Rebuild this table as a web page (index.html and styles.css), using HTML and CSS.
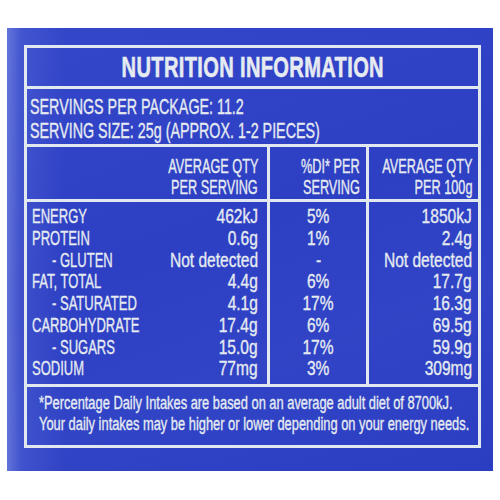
FILE: index.html
```html
<!DOCTYPE html>
<html lang="en">
<head>
    <meta charset="UTF-8">
    <meta name="viewport" content="width=device-width, initial-scale=1.0">
    <title>Nutrition Information</title>
    <link rel="stylesheet" href="styles.css">
</head>
<body>

<div class="pack">
    <div class="label">
        <h1 class="label-title"><span class="sq">NUTRITION INFORMATION</span></h1>

        <div class="servings">
            <div class="servings-line"><span class="sq">SERVINGS PER PACKAGE: 11.2</span></div>
            <div class="servings-line"><span class="sq">SERVING SIZE: 25g (APPROX. 1-2 PIECES)</span></div>
        </div>

        <div class="facts facts-head">
            <div class="col col-name"></div>
            <div class="col col-serve">
                <div class="ln"><span class="sq">AVERAGE QTY</span></div>
                <div class="ln"><span class="sq">PER SERVING</span></div>
            </div>
            <div class="col col-di">
                <div class="ln"><span class="sq">%DI* PER</span></div>
                <div class="ln"><span class="sq">SERVING</span></div>
            </div>
            <div class="col col-100">
                <div class="ln"><span class="sq">AVERAGE QTY</span></div>
                <div class="ln"><span class="sq">PER 100g</span></div>
            </div>
        </div>

        <div class="facts facts-body">
            <div class="col col-name" id="col-name"></div>
            <div class="col col-serve" id="col-serve"></div>
            <div class="col col-di" id="col-di"></div>
            <div class="col col-100" id="col-100"></div>
        </div>

        <div class="footnote">
            <div class="foot-line"><span class="sq">*Percentage Daily Intakes are based on an average adult diet of 8700kJ.</span></div>
            <div class="foot-line"><span class="sq">Your daily intakes may be higher or lower depending on your energy needs.</span></div>
        </div>
    </div>
</div>

<script>
    const nutrients = [
        { name: 'ENERGY', serve: '462kJ', di: '5%', per100: '1850kJ' },
        { name: 'PROTEIN', serve: '0.6g', di: '1%', per100: '2.4g' },
        { name: '- GLUTEN', sub: true, serve: 'Not detected', di: '-', per100: 'Not detected' },
        { name: 'FAT, TOTAL', serve: '4.4g', di: '6%', per100: '17.7g' },
        { name: '- SATURATED', sub: true, serve: '4.1g', di: '17%', per100: '16.3g' },
        { name: 'CARBOHYDRATE', serve: '17.4g', di: '6%', per100: '69.5g' },
        { name: '- SUGARS', sub: true, serve: '15.0g', di: '17%', per100: '59.9g' },
        { name: 'SODIUM', serve: '77mg', di: '3%', per100: '309mg' },
    ];

    function addLine(colId, text, sub) {
        const line = document.createElement('div');
        line.className = sub ? 'ln ln-sub' : 'ln';
        line.innerHTML = `<span class="sq">${text}</span>`;
        document.getElementById(colId).appendChild(line);
    }

    nutrients.forEach(item => {
        addLine('col-name', item.name, item.sub);
        addLine('col-serve', item.serve);
        addLine('col-di', item.di);
        addLine('col-100', item.per100);
    });
</script>

</body>
</html>
```

FILE: styles.css
```css
body {
    margin: 0;
    background: #fff;
    font-family: "Liberation Sans", Arial, sans-serif;
    color: #e6ebf1;
}
.pack {
    margin: 28px 7px 0;
    height: 443px;
    box-sizing: border-box;
    padding: 17px 12px 0 17px;
    background:
        linear-gradient(90deg, rgba(140, 155, 235, 0.55) 0, rgba(110, 125, 225, 0.25) 3%, rgba(60, 78, 205, 0) 12%),
        linear-gradient(160deg, #3447c9 0%, #2d3fc3 45%, #3144c6 70%, #2b3dc1 100%);
}
.label {
    border: 3px solid #e2e8ef;
    overflow: hidden;
    -webkit-text-stroke: 0.35px #e6ebf1;
}
.sq {
    display: inline-block;
    white-space: nowrap;
    transform: scaleX(0.62);
    transform-origin: left center;
}
.label-title {
    margin: 0;
    height: 38px;
    line-height: 38px;
    font-size: 30px;
    font-weight: bold;
    text-align: center;
    border-bottom: 3px solid #e2e8ef;
    -webkit-text-stroke: 0.6px #e6ebf1;
}
.label-title .sq {
    transform: scaleX(0.67);
    transform-origin: center;
    letter-spacing: 0.5px;
}
.servings {
    padding: 6px 0 2px 3px;
    font-size: 22px;
    line-height: 23.5px;
    border-bottom: 3px solid #e2e8ef;
    white-space: nowrap;
}
.servings .sq {
    transform: scaleX(0.65);
}
.facts {
    display: flex;
    border-bottom: 3px solid #e2e8ef;
}
.col {
    box-sizing: border-box;
    font-size: 21px;
    min-width: 0;
}
.col-name {
    flex: 1 1 0;
    padding-left: 5px;
}
.col-serve {
    flex: none;
    width: 120px;
    padding-right: 9px;
    border-right: 3px solid #e2e8ef;
}
.col-di {
    flex: none;
    width: 99px;
    border-right: 3px solid #e2e8ef;
}
.col-100 {
    flex: none;
    width: 109px;
    padding-right: 6px;
}
.facts-head .col {
    padding-top: 8px;
    padding-bottom: 2px;
    font-size: 20.5px;
}
.facts-head .ln {
    height: 21px;
    line-height: 21px;
}
.facts-body .col {
    padding-top: 3px;
    padding-bottom: 5px;
}
.facts-body .ln {
    height: 21.75px;
    line-height: 21.75px;
}
.ln {
    display: flex;
}
.ln-sub {
    padding-left: 20px;
}
.col-serve .ln, .col-100 .ln {
    justify-content: flex-end;
}
.col-serve .sq, .col-100 .sq {
    transform-origin: right center;
}
.facts-body .col-serve .sq, .facts-body .col-100 .sq, .facts-body .col-di .sq {
    transform: scaleX(0.74);
}
.facts-head .sq {
    transform: scaleX(0.62);
}
.facts-head .col-di .ln {
    justify-content: flex-end;
    padding-right: 6px;
}
.facts-head .col-di .sq {
    transform-origin: right center;
}
.facts-body .col-di .ln {
    justify-content: center;
}
.facts-body .col-di .sq {
    transform-origin: center;
}
.footnote {
    height: 58px;
    box-sizing: border-box;
    padding: 6px 0 0 12px;
    font-size: 18px;
    line-height: 21px;
    white-space: nowrap;
}
.footnote .sq {
    transform: scaleX(0.715);
}
```
